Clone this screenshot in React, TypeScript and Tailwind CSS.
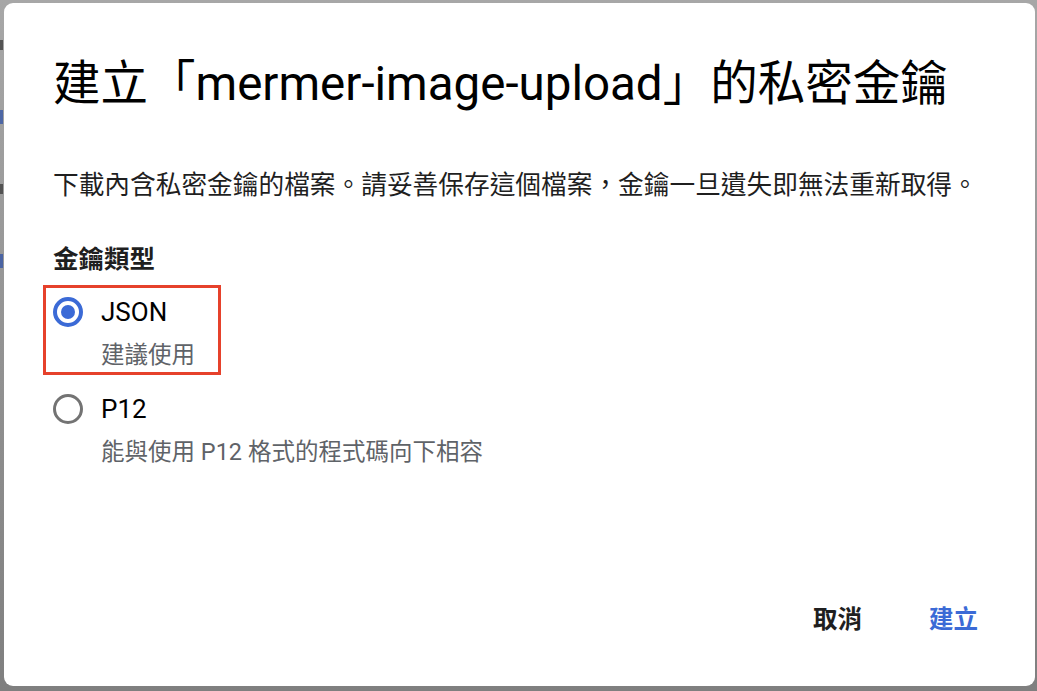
import { useState } from "react"

type KeyType = "JSON" | "P12"

const OPTIONS: { value: KeyType; hint: string }[] = [
  { value: "JSON", hint: "建議使用" },
  { value: "P12", hint: "能與使用 P12 格式的程式碼向下相容" },
]

function Radio({ checked }: { checked: boolean }) {
  return checked ? (
    <span className="flex h-[30px] w-[30px] shrink-0 items-center justify-center rounded-full border-[4px] border-[#3b6ad6]">
      <span className="h-[14px] w-[14px] rounded-full bg-[#3b6ad6]" />
    </span>
  ) : (
    <span className="h-[30px] w-[30px] shrink-0 rounded-full border-[3.5px] border-[#737373]" />
  )
}

export default function App() {
  const [keyType, setKeyType] = useState<KeyType>("JSON")

  return (
    <div className="relative h-[691px] w-[1037px] overflow-hidden bg-gradient-to-b from-[#a7a7a7] to-[#7f7f7f] font-['Roboto','Noto_Sans_CJK_TC',sans-serif]">
      {/* page behind the dialog, only a sliver shows */}
      <div className="absolute left-0 top-[40px] h-[500px] w-[4px] space-y-[60px] opacity-70">
        <div className="h-[10px] w-[3px] bg-[#333]" />
        <div className="h-[14px] w-[3px] bg-[#2b4fa8]" />
        <div className="h-[10px] w-[3px] bg-[#333]" />
        <div className="h-[14px] w-[3px] bg-[#2b4fa8]" />
      </div>

      <div className="absolute left-[4px] top-[3px] flex h-[683px] w-[1031px] flex-col rounded-[9px] bg-white pl-[49px] pr-[57px] pt-[53px] pb-[49px] text-[#202124]">
        <h1 className="text-[47.5px] leading-[56px] font-normal text-black">建立「mermer-image-upload」的私密金鑰</h1>

        <p className="mt-[55px] text-[25.7px] leading-[36px] text-[#1f1f1f]">
          下載內含私密金鑰的檔案。請妥善保存這個檔案，金鑰一旦遺失即無法重新取得。
        </p>

        <h2 className="mt-[38px] text-[25.5px] leading-[36px] font-bold text-[#1f1f1f]">金鑰類型</h2>

        <div className="mt-[17px] flex flex-col">
          {OPTIONS.map((o, i) => (
            <label key={o.value} className={`relative flex cursor-pointer flex-col ${i > 0 ? "mt-[20px]" : ""}`} onClick={() => setKeyType(o.value)}>
              {i === 0 && (
                <span className="pointer-events-none absolute left-[-10px] top-[-9px] h-[90px] w-[178px] border-[3px] border-[#e6412b]" />
              )}
              <span className="flex items-center gap-[18px] leading-[36px]">
                <Radio checked={keyType === o.value} />
                <span className="text-[26px] text-black">{o.value}</span>
              </span>
              <span className="mt-[9px] pl-[48px] text-[23.5px] leading-[32px] text-[#5f6368]">{o.hint}</span>
            </label>
          ))}
        </div>

        <div className="mt-auto flex items-center justify-end gap-[67px]">
          <button className="text-[24.5px] leading-[34px] font-bold text-[#1f1f1f]">取消</button>
          <button className="text-[24.5px] leading-[34px] font-bold text-[#3b6ad6]">建立</button>
        </div>
      </div>
    </div>
  )
}
